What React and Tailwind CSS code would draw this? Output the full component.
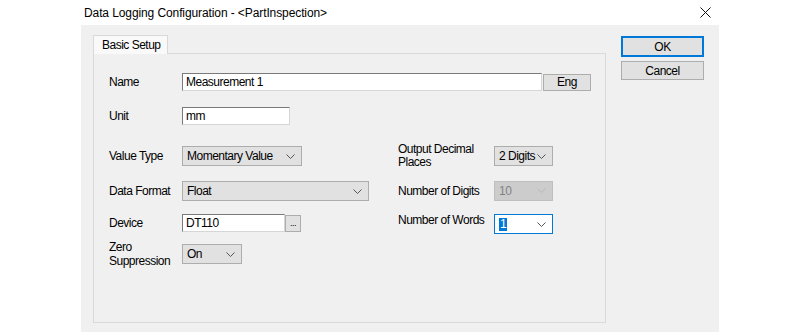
import React from "react";

const Chevron = ({ disabled }) => (
    <svg width="9" height="5" viewBox="0 0 9 5" className="shrink-0">
        <path d="M0.5 0.5 L4.5 4.5 L8.5 0.5" fill="none" stroke={disabled ? "#b8b8b8" : "#555555"} strokeWidth="1" />
    </svg>
);

const Combo = ({ value, width, disabled, focused }) => {
    let box = "bg-[#e1e1e1] border-[#adadad] text-black";
    if (disabled) box = "bg-[#cccccc] border-[#bfbfbf] text-[#838383]";
    if (focused) box = "bg-white border-[#0078d7] text-black";
    return (
        <div className={`flex h-[20px] shrink-0 items-center justify-between whitespace-nowrap border pl-[4px] pr-[6px] ${box} ${width}`}>
            {focused ? (
                <span className="bg-[#0078d7] px-[1px] leading-[13px] text-white">{value}</span>
            ) : (
                <span className="leading-none">{value}</span>
            )}
            <Chevron disabled={disabled} />
        </div>
    );
};

const Field = ({ value, width }) => (
    <div className={`flex h-[18px] items-center border border-[#7a7a7a] border-b-[#d6d6d6] border-r-[#d6d6d6] bg-white pl-[3px] leading-none ${width}`}>
        {value}
    </div>
);

const Label = ({ children, width = "w-[73px]", lead = "leading-[12px]" }) => (
    <div className={`shrink-0 whitespace-nowrap ${lead} ${width}`}>{children}</div>
);

const App = () => {
    return (
        <div className="flex h-[332px] w-[800px] flex-col bg-white font-['Liberation_Sans',Arial,sans-serif] text-[12px] text-black">
            {/* title bar */}
            <div className="flex h-[25px] shrink-0 items-center">
                <span className="ml-[84px] text-[12px] tracking-[-0.1px]">Data Logging Configuration - &lt;PartInspection&gt;</span>
                <svg width="11" height="11" viewBox="0 0 11 11" className="ml-auto mr-[89px]">
                    <path d="M0.5 0.5 L10.5 10.5 M10.5 0.5 L0.5 10.5" stroke="#111" strokeWidth="1" />
                </svg>
            </div>

            {/* dialog body */}
            <div className="ml-[81px] flex w-[638px] flex-1 bg-[#f0f0f0] pl-[12px] pt-[10px] tracking-[-0.5px]">
                <div className="flex flex-col">
                    <div className="relative z-10 -mb-[1px] flex h-[19px] w-[75px] items-center border border-b-0 border-[#d9d9d9] bg-[#f9f9f9] pl-[8px]">
                        Basic Setup
                    </div>
                    <div className="h-[270px] w-[513px] border border-[#d9d9d9] pl-[15px] pt-[19px]">
                        <div className="flex items-center">
                            <Label>Name</Label>
                            <Field value="Measurement 1" width="w-[360px]" />
                            <div className="ml-[1px] flex h-[17px] w-[48px] items-center justify-center border border-[#adadad] bg-[#e1e1e1]">
                                Eng
                            </div>
                        </div>
                        <div className="mt-[16px] flex items-center">
                            <Label>Unit</Label>
                            <Field value="mm" width="w-[108px]" />
                        </div>

                        <div className="mt-[21px] flex">
                            <div className="flex w-[289px] flex-col">
                                <div className="flex h-[35px] items-start">
                                    <div className="flex h-[20px] items-center">
                                        <Label>Value Type</Label>
                                        <Combo value="Momentary Value" width="w-[120px]" />
                                    </div>
                                </div>
                                <div className="flex h-[33px] items-start">
                                    <div className="flex h-[20px] items-center">
                                        <Label>Data Format</Label>
                                        <Combo value="Float" width="w-[187px]" />
                                    </div>
                                </div>
                                <div className="flex h-[30px] items-start">
                                    <div className="flex h-[18px] items-center">
                                        <Label>Device</Label>
                                        <Field value="DT110" width="w-[103px]" />
                                        <div className="flex h-[17px] w-[16px] items-end justify-center border border-[#adadad] bg-[#e1e1e1] pb-[3px] text-[9px] leading-none">
                                            ...
                                        </div>
                                    </div>
                                </div>
                                <div className="flex items-start">
                                    <div className="-mt-[4px]">
                                        <Label lead="leading-[14px]">
                                            Zero
                                            <br />
                                            Suppression
                                        </Label>
                                    </div>
                                    <Combo value="On" width="w-[60px]" />
                                </div>
                            </div>

                            <div className="flex flex-col">
                                <div className="flex h-[35px] items-start">
                                    <div className="-mt-[3px]">
                                        <Label width="w-[96px]" lead="leading-[13px]">
                                            Output Decimal
                                            <br />
                                            Places
                                        </Label>
                                    </div>
                                    <Combo value="2 Digits" width="w-[59px]" />
                                </div>
                                <div className="flex h-[33px] items-start">
                                    <div className="flex h-[19px] items-center">
                                        <Label width="w-[96px]">Number of Digits</Label>
                                        <Combo value="10" width="w-[59px]" disabled />
                                    </div>
                                </div>
                                <div className="flex items-start">
                                    <div className="pt-[-1px]">
                                        <Label width="w-[96px]">Number of Words</Label>
                                    </div>
                                    <Combo value="1" width="w-[59px]" focused />
                                </div>
                            </div>
                        </div>
                    </div>
                </div>

                <div className="ml-[15px] mt-[1px] flex flex-col">
                    <div className="flex h-[21px] w-[83px] items-center justify-center border-2 border-[#0078d7] bg-[#e1e1e1]">
                        OK
                    </div>
                    <div className="mt-[4px] flex h-[19px] w-[83px] items-center justify-center border border-[#adadad] bg-[#e1e1e1]">
                        Cancel
                    </div>
                </div>
            </div>
        </div>
    );
};

export default App;
